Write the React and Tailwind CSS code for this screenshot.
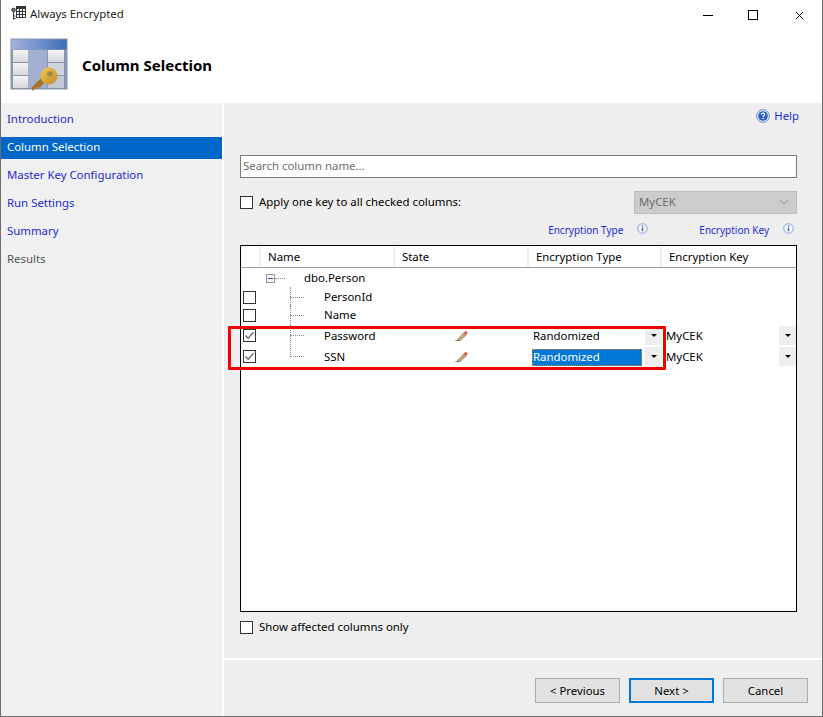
import React from "react";
import { X } from "lucide-react";

const steps = [
  { label: "Introduction" },
  { label: "Column Selection", active: true },
  { label: "Master Key Configuration" },
  { label: "Run Settings" },
  { label: "Summary" },
  { label: "Results", muted: true },
];

const columns = [
  { name: "PersonId", h: "h-[18px] pt-[2px]" },
  { name: "Name", h: "h-[20px]" },
  { name: "Password", h: "h-[21px]", checked: true, selected: false },
  { name: "SSN", h: "h-[21px]", checked: true, selected: true },
];

const Check = ({ checked, className = "" }) => (
  <span className={`flex h-[13px] w-[13px] flex-none items-center justify-center border border-[#333] bg-white ${className}`}>
    {checked && (
      <svg viewBox="0 0 11 11" className="h-[11px] w-[11px]" fill="none" stroke="#555" strokeWidth="1.2">
        <path d="M1.5 5.5l2.6 2.8L9.5 2.2" />
      </svg>
    )}
  </span>
);

const InfoIcon = () => (
  <svg viewBox="0 0 12 12" className="h-[11px] w-[11px] flex-none">
    <circle cx="6" cy="6" r="5.2" fill="#f4f7fc" stroke="#7d9bd0" />
    <rect x="5.2" y="5" width="1.6" height="4" fill="#3c66ad" />
    <rect x="5.2" y="2.8" width="1.6" height="1.4" fill="#3c66ad" />
  </svg>
);

const Pencil = () => (
  <svg viewBox="0 0 13 11" className="h-[11px] w-[13px]">
    <path d="M0 10.5h5" stroke="#a0a0a0" strokeWidth="1" />
    <path d="M2.5 9.5L8.5 3 11 5.2 5 10.8z" fill="#c9a877" stroke="#6e5a3a" strokeWidth="0.5" />
    <path d="M8.5 3l1.5-1.8c.4-.4.9-.4 1.3 0l1 .9c.4.4.4.9 0 1.3L11 5.2z" fill="#d5604f" />
    <path d="M2.5 9.5l-.5 1.3 1.5-.3z" fill="#333" />
  </svg>
);

const DropButton = () => (
  <span className="flex h-[19px] w-[17px] flex-none items-center justify-center bg-[#eeeeee]">
    <span className="h-0 w-0 border-x-[3px] border-t-[3px] border-x-transparent border-t-black" />
  </span>
);

const BannerIcon = () => (
  <svg viewBox="0 0 58 54" className="h-[54px] w-[58px] flex-none">
    <defs>
      <linearGradient id="head" x1="0" x2="1" y1="0" y2="0">
        <stop offset="0" stopColor="#a3b2dc" />
        <stop offset="1" stopColor="#3f6db8" />
      </linearGradient>
      <linearGradient id="cell" x1="0" x2="0" y1="0" y2="1">
        <stop offset="0" stopColor="#f4f4f4" />
        <stop offset="1" stopColor="#d5d7dc" />
      </linearGradient>
      <linearGradient id="keyhead" x1="0" x2="1" y1="0" y2="1">
        <stop offset="0" stopColor="#f6ca4c" />
        <stop offset="1" stopColor="#c08a2c" />
      </linearGradient>
    </defs>
    <rect x="0.5" y="0.5" width="57" height="51" fill="#8a95ad" />
    <rect x="1.5" y="1.5" width="55" height="10" fill="url(#head)" />
    <rect x="3" y="12" width="15" height="12" fill="url(#cell)" />
    <rect x="3" y="25" width="15" height="12" fill="url(#cell)" />
    <rect x="3" y="38" width="15" height="12" fill="url(#cell)" />
    <rect x="18" y="12" width="19" height="38" fill="#a3afd0" />
    <rect x="38" y="12" width="16" height="12" fill="url(#cell)" />
    <rect x="38" y="25" width="16" height="12" fill="#cfd3dc" />
    <rect x="38" y="38" width="16" height="12" fill="#c3c8d4" />
    <path d="M21 50l12-12 4 4-6 6-1 2-2-1-1 2-2-1-2 3z" fill="#a5752a" />
    <circle cx="39" cy="38" r="8.5" fill="url(#keyhead)" />
    <circle cx="40" cy="36" r="2.8" fill="#a08848" />
  </svg>
);

const App = () => {
  return (
    <div className="flex h-[717px] w-[823px] flex-col overflow-hidden border-x border-b border-[#6e6e6e] bg-white font-['Noto_Sans',sans-serif] text-[11.4px] text-black">
      {/* title bar */}
      <div className="flex h-[30px] flex-none items-center pl-[10px]">
        <svg viewBox="0 0 15 14" className="mb-[4px] h-[14px] w-[15px] flex-none" fill="none" stroke="#333" strokeWidth="1">
          <rect x="5" y="0" width="10" height="3" fill="#333" stroke="none" />
          <path d="M5.5 3v8.5h9V3M8.5 3v8.5M11.5 3v8.5M5.5 5.5h9M5.5 8.5h9" />
          <circle cx="2.5" cy="4" r="1.8" fill="#777" />
          <path d="M2.5 6v7.5M2.5 10h2M2.5 12.5h2" />
        </svg>
        <span className="mb-[2px] ml-[4px] text-[#222]">Always Encrypted</span>
        <div className="ml-auto flex items-center">
          <span className="flex h-[26px] w-[42px] items-center justify-center">
            <span className="h-px w-[10px] bg-black" />
          </span>
          <span className="flex h-[26px] w-[48px] items-center justify-center">
            <span className="h-[10px] w-[10px] border border-black" />
          </span>
          <span className="flex h-[26px] w-[45px] items-center justify-center">
            <X size={13} strokeWidth={1} absoluteStrokeWidth />
          </span>
        </div>
      </div>

      {/* banner */}
      <div className="flex h-[73px] flex-none items-start pl-[9px] pt-[8px]">
        <BannerIcon />
        <h1 className="ml-[14px] mt-[17px] text-[15px] leading-[21px] font-bold">Column Selection</h1>
      </div>

      <div className="flex min-h-0 flex-1 gap-[2px]">
        {/* steps */}
        <nav className="flex w-[221px] flex-none flex-col bg-[#f0f0f0] pt-[6px]">
          {steps.map((step) => (
            <div
              key={step.label}
              className={`mb-[6px] flex h-[22px] items-center pb-[2px] pl-[6px] ${
                step.active ? "bg-[#0067c9] text-white" : step.muted ? "text-[#555]" : "text-[#1a2bd0]"
              }`}
            >
              {step.label}
            </div>
          ))}
        </nav>

        {/* main */}
        <div className="flex min-w-0 flex-1 flex-col bg-[#eeeeee]">
          <div className="flex h-[24px] flex-none items-center justify-end gap-[4px] pr-[23px] pt-[1px] text-[#1a2bd0]">
            <svg viewBox="0 0 14 14" className="h-[14px] w-[14px]">
              <circle cx="7" cy="7" r="6.4" fill="#dfe8f6" stroke="#6f8fc8" />
              <circle cx="7" cy="7" r="4.8" fill="#2a62bd" />
              <path d="M5.4 5.6c0-1 .8-1.5 1.7-1.5s1.6.6 1.6 1.4c0 1.2-1.5 1.2-1.5 2.4" stroke="#fff" strokeWidth="1.2" fill="none" />
              <rect x="6.5" y="8.8" width="1.3" height="1.3" fill="#fff" />
            </svg>
            Help
          </div>

          <div className="flex flex-1 flex-col pl-[16px] pr-[25px] pt-[28px]">
            <div className="flex h-[23px] flex-none items-center border border-[#7a7a7a] bg-white pb-[2px] pl-[2px] text-[#6d6d6d]">
              Search column name...
            </div>

            <div className="mt-[12px] flex h-[24px] flex-none items-center">
              <Check />
              <span className="ml-[6px]">Apply one key to all checked columns:</span>
              <div className="ml-auto flex h-[23px] w-[163px] items-center justify-between border border-[#bdbdbd] bg-[#cccccc] px-[4px] text-[#6d6d6d]">
                MyCEK
                <svg viewBox="0 0 10 6" className="mr-[3px] h-[6px] w-[10px]" fill="none" stroke="#9a9a9a">
                  <path d="M1 1l4 4 4-4" />
                </svg>
              </div>
            </div>

            <div className="mt-[6px] flex h-[20px] flex-none items-center justify-end pr-[3px] text-[10px] text-[#1a2bd0]">
              <span>Encryption Type</span>
              <span className="-mt-[3px] ml-[14px]"><InfoIcon /></span>
              <span className="ml-[51px]">Encryption Key</span>
              <span className="-mt-[3px] ml-[14px]"><InfoIcon /></span>
            </div>

            {/* table */}
            <div className="relative mt-[5px] h-[367px] flex-none border border-black bg-white">
              <div className="flex h-[22px] items-center border-b border-[#a0a0a0] pt-px">
                <span className="h-full w-[20px] flex-none border-r-2 border-[#eeeeee]" />
                <span className="h-full w-[134px] flex-none border-r-2 border-[#eeeeee] pl-[7px] leading-[20px]">Name</span>
                <span className="h-full w-[134px] flex-none border-r-2 border-[#eeeeee] pl-[7px] leading-[20px]">State</span>
                <span className="h-full w-[133px] flex-none border-r-2 border-[#eeeeee] pl-[7px] leading-[20px]">Encryption Type</span>
                <span className="h-full flex-1 pl-[7px] leading-[20px]">Encryption Key</span>
              </div>

              <div className="flex h-[19px] items-center pt-[1px]">
                <span className="ml-[25px] flex h-[9px] w-[9px] items-center justify-center border border-[#999] bg-[#f4f4f4]">
                  <span className="h-px w-[5px] bg-[#2b4fa8]" />
                </span>
                <span className="w-[10px] border-t border-dotted border-[#888]" />
                <span className="ml-[19px]">dbo.Person</span>
              </div>

              {columns.map((col, i) => (
                <div key={col.name} className={`flex items-center ${col.h}`}>
                  <span className="flex w-[20px] flex-none justify-start pl-[2px]">
                    <Check checked={col.checked} />
                  </span>
                  <span className="relative ml-[29px] w-[14px] flex-none border-t border-dotted border-[#888]">
                    <span className={`absolute left-0 w-0 border-l border-dotted border-[#888] ${i === 3 ? "bottom-0 h-[21px]" : "-top-[11px] h-[22px]"}`} />
                  </span>
                  <span className="ml-[20px] w-[72px] flex-none">{col.name}</span>
                  <span className="ml-[59px] w-[13px] flex-none">{col.checked && <Pencil />}</span>
                  {col.checked && (
                    <>
                      <span className="ml-[64px] flex w-[130px] flex-none items-center">
                        <span
                          className={`mt-[2px] h-[17px] w-[110px] flex-none pl-px leading-[16px] ${
                            col.selected ? "bg-[#0078d7] text-white outline-1 -outline-offset-1 outline-dotted outline-[#c58a2e]" : ""
                          }`}
                        >
                          Randomized
                        </span>
                        <span className="ml-[3px]"><DropButton /></span>
                      </span>
                      <span className="ml-[4px] flex-1">MyCEK</span>
                      <DropButton />
                    </>
                  )}
                </div>
              ))}

              {/* red highlight drawn over the grid */}
              <div className="absolute left-[-13px] top-[80px] h-[44px] w-[438px] rounded-[1px] border-[3px] border-[#f00000]" />
            </div>

            <div className="mt-[7px] flex h-[16px] flex-none items-center">
              <Check />
              <span className="ml-[6px]">Show affected columns only</span>
            </div>
          </div>

          {/* footer */}
          <div className="flex h-[58px] flex-none items-start justify-end gap-[9px] border-t-2 border-white pr-[14px] pt-[18px]">
            <button className="h-[25px] w-[85px] border border-[#adadad] bg-[#e1e1e1]">&lt; Previous</button>
            <button className="h-[25px] w-[85px] border-2 border-[#0078d7] bg-[#e1e1e1]">Next &gt;</button>
            <button className="h-[25px] w-[85px] border border-[#adadad] bg-[#e1e1e1]">Cancel</button>
          </div>
        </div>
      </div>
    </div>
  );
};

export default App;
